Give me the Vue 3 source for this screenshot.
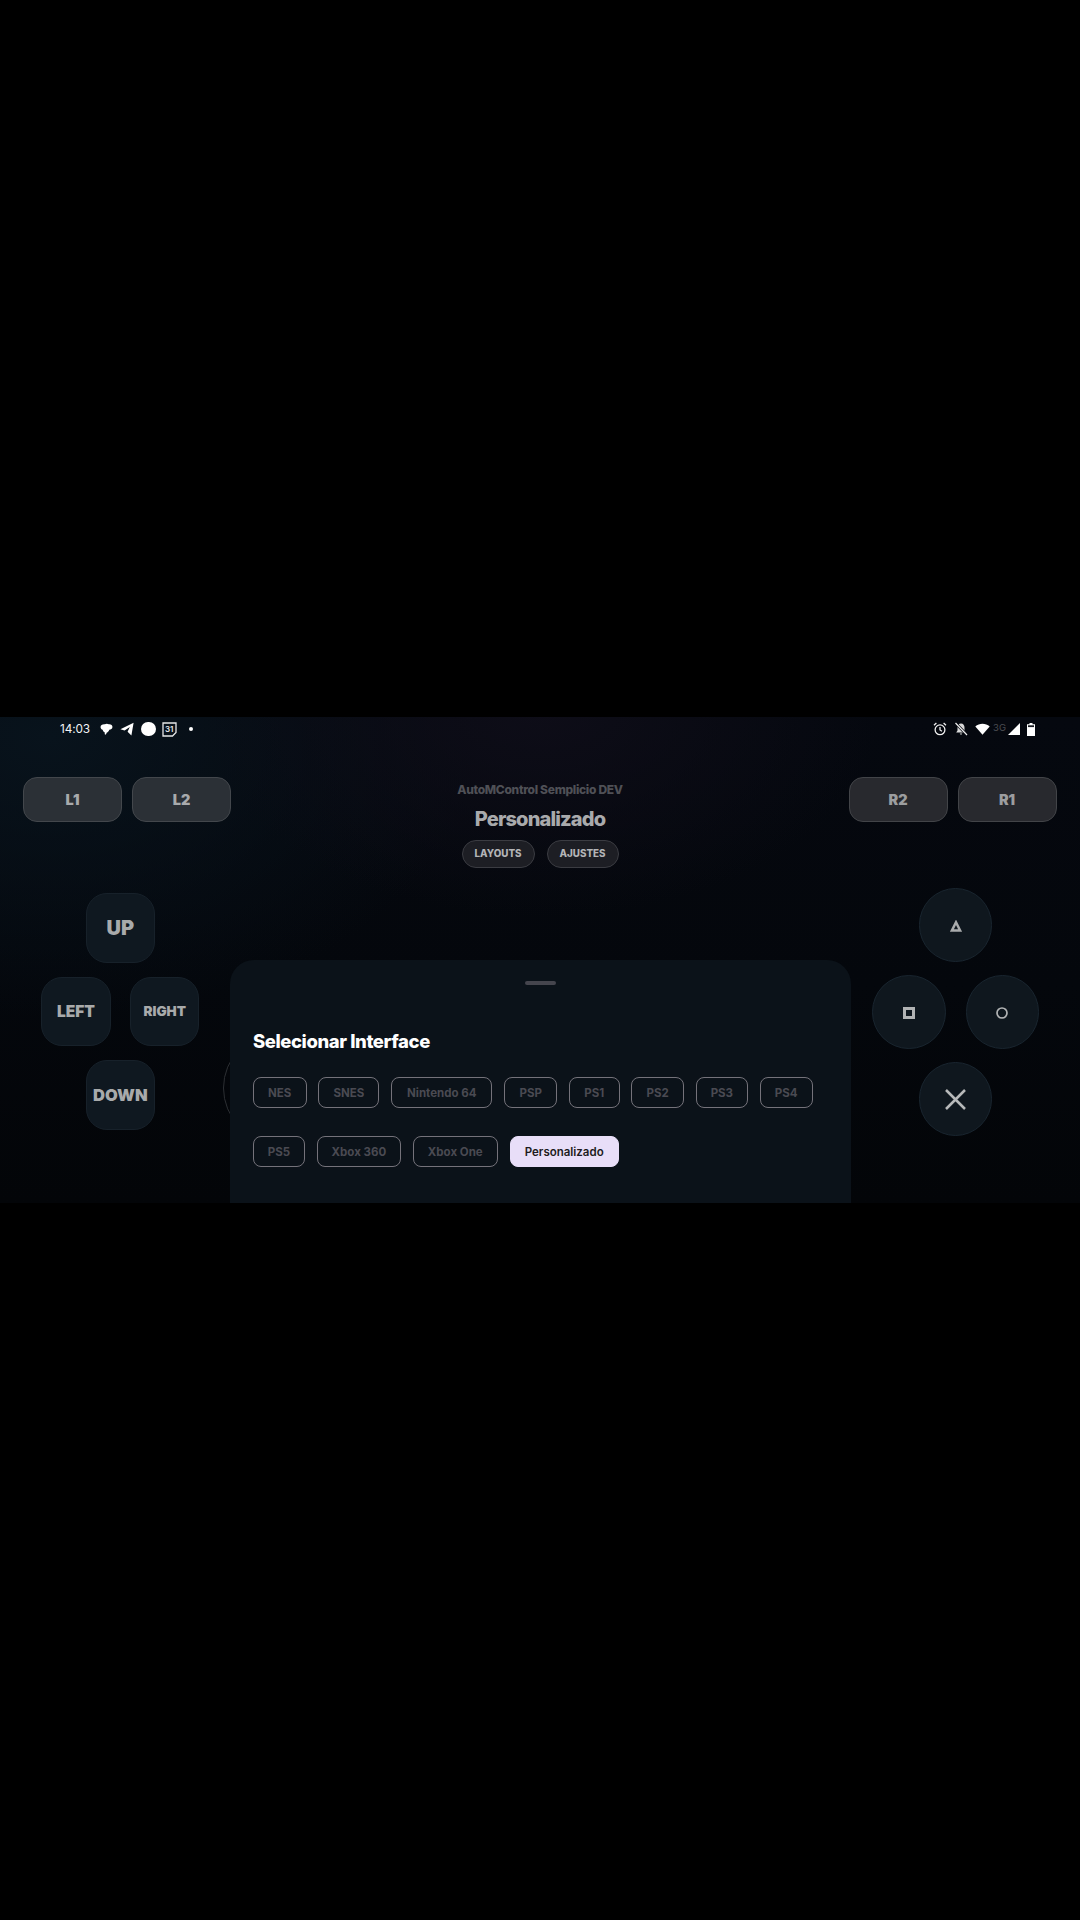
<script setup>
const chipRows = [
  [
    { label: 'NES', w: 53.5 },
    { label: 'SNES', w: 61 },
    { label: 'Nintendo 64', w: 101 },
    { label: 'PSP', w: 53 },
    { label: 'PS1', w: 50.5 },
    { label: 'PS2', w: 52.5 },
    { label: 'PS3', w: 52 },
    { label: 'PS4', w: 53 },
  ],
  [
    { label: 'PS5', w: 52 },
    { label: 'Xbox 360', w: 84 },
    { label: 'Xbox One', w: 85 },
    { label: 'Personalizado', w: 109, active: true },
  ],
]
</script>

<template>
  <main class="page">
    <section class="screen">
      <header class="status">
        <div class="status-left">
          <span class="time">14:03</span>
          <svg class="ic bubble" viewBox="0 0 14 14"><path d="M.6 4.200C.6 2.400 2.800 1.100 5.200 1.400 6.400.6 8.400.6 9.400 1.400 11.600 1.100 13.600 2.400 13.400 4.400 13.400 6.300 11.600 7.400 10 7.400 9.600 8.900 8.600 10 7.200 10.600 6.700 12.300 6 13 5.300 12.500 5 11.800 5.100 11 5.200 10.200 3.800 9.400 3 8.400 2.900 7.200 1.500 6.800.6 5.600.6 4.200Z" fill="#fff"/></svg>
          <svg class="ic plane" viewBox="0 0 14 14"><path d="M13.600.8 11.400 13.400 7.600 9.800 9.800 5 4.600 8.600.4 7.200Z" fill="#fff"/></svg>
          <span class="dot-big"></span>
          <svg class="ic cal" viewBox="0 0 15 15"><path d="M1 1h13v9.500L10.500 14H1Z" fill="none" stroke="#e6e7e8" stroke-width="1.300"/><text x="7.200" y="10.300" text-anchor="middle" class="cal-text">31</text></svg>
          <span class="dot-small"></span>
        </div>
        <div class="status-right">
          <svg class="ic alarm" viewBox="0 0 14 14"><circle cx="7" cy="7.800" r="4.900" fill="none" stroke="#f0f0f0" stroke-width="1.300"/><path d="M7 5v3l2 1.200M1 3.200 3.400 1M13 3.200 10.600 1" fill="none" stroke="#f0f0f0" stroke-width="1.300"/></svg>
          <svg class="ic belloff" viewBox="0 0 14 14"><path d="M7 1.500c2.300 0 3.500 1.800 3.500 4v3l1.300 2H2.200l1.300-2v-3c0-2.200 1.200-4 3.500-4ZM5.700 11.500h2.600L7 13Z" fill="#d8d8d8"/><path d="M1.500 1 13 13" stroke="#050810" stroke-width="2.600"/><path d="M1.500 1 13 13" stroke="#f0f0f0" stroke-width="1.200"/></svg>
          <svg class="ic wifi" viewBox="0 0 15 12"><path d="M.3 3.500C4.300-.2 10.700-.2 14.700 3.500L7.500 11.800Z" fill="#fff"/></svg>
          <span class="net">3G</span>
          <svg class="ic signal" viewBox="0 0 12 12"><path d="M12 0V12H0Z" fill="#fff"/></svg>
          <svg class="ic batt" viewBox="0 0 8 13"><path d="M2.500 0h3v1.300H8V13H0V1.300h2.500Z" fill="#fff"/><rect x="1" y="2.300" width="6" height="1.800" fill="#16191f"/></svg>
        </div>
      </header>

      <div class="top">
        <div class="shoulders">
          <button class="shoulder teal">L1</button>
          <button class="shoulder teal">L2</button>
        </div>
        <div class="center">
          <div class="app-name">AutoMControl Semplicio DEV</div>
          <h1 class="layout-name">Personalizado</h1>
          <div class="pills">
            <button class="pill p-layouts">LAYOUTS</button>
            <button class="pill p-ajustes">AJUSTES</button>
          </div>
        </div>
        <div class="shoulders">
          <button class="shoulder">R2</button>
          <button class="shoulder">R1</button>
        </div>
      </div>

      <div class="pads">
        <div class="dpad">
          <button class="key k-up">UP</button>
          <div class="mid">
            <button class="key k-left">LEFT</button>
            <button class="key k-right">RIGHT</button>
          </div>
          <button class="key k-down">DOWN</button>
        </div>
        <div class="face">
          <button class="round">
            <svg class="sym tri" viewBox="0 0 12 12"><path d="M6 2.300 10.200 10.600H1.800Z" fill="none" stroke="#a9abac" stroke-width="2.500"/></svg>
          </button>
          <div class="mid wide">
            <button class="round">
              <svg class="sym sq" viewBox="0 0 12 12"><rect x="1.500" y="1.500" width="9" height="9" fill="none" stroke="#b1b3b4" stroke-width="3"/></svg>
            </button>
            <button class="round">
              <svg class="sym ring" viewBox="0 0 12 12"><circle cx="6" cy="6" r="5" fill="none" stroke="#b1b3b4" stroke-width="1.700"/></svg>
            </button>
          </div>
          <button class="round">
            <svg class="sym cross" viewBox="0 0 21 21"><path d="M1 1 20 20M20 1 1 20" fill="none" stroke="#b7b9ba" stroke-width="2.500"/></svg>
          </button>
        </div>
      </div>

      <div class="stick"></div>

      <aside class="sheet">
        <div class="handle"></div>
        <h2 class="sheet-title">Selecionar Interface</h2>
        <div v-for="(row, i) in chipRows" :key="i" class="chips">
          <button
            v-for="chip in row"
            :key="chip.label"
            class="chip"
            :class="{ active: chip.active }"
            :style="{ width: chip.w + 'px' }"
          >{{ chip.label }}</button>
        </div>
      </aside>
    </section>
  </main>
</template>

<style>
html, body { background: #000; }
</style>

<style scoped>
.page {
  height: 1920px;
  width: 1080px;
  background: #000;
  padding-top: 717px;
  box-sizing: border-box;
  font-family: Inter, "Liberation Sans", sans-serif;
}
.screen {
  position: relative;
  height: 486px;
  overflow: hidden;
  background:
    radial-gradient(340px 210px at 540px -10px, #0e0d18 0%, rgba(14, 13, 24, 0) 100%),
    radial-gradient(430px 280px at 50px 20px, #08131c 0%, rgba(8, 19, 28, 0) 100%),
    linear-gradient(180deg, #05080f 0%, #04070c 55%, #030508 100%);
}
button {
  font-family: inherit;
  padding: 0;
  margin: 0;
  box-sizing: border-box;
  cursor: pointer;
}

/* status bar */
.status {
  height: 24px;
  display: flex;
  justify-content: space-between;
  align-items: center;
  padding: 0 45.500px 0 60px;
}
.status-left, .status-right {
  display: flex;
  align-items: center;
}
.time {
  font-size: 11.800px;
  color: #f2f3f4;
  width: 40px;
  letter-spacing: -0.1px;
}
.ic { display: block; }
.bubble { width: 13px; height: 13px; }
.plane { width: 14px; height: 14px; margin-left: 7px; }
.dot-big {
  width: 14.500px;
  height: 14.500px;
  border-radius: 50%;
  background: #fff;
  margin-left: 7px;
}
.cal { width: 15px; height: 15px; margin-left: 6px; }
.cal-text {
  font-size: 8px;
  font-weight: 600;
  fill: #e6e7e8;
}
.dot-small {
  width: 4px;
  height: 4px;
  border-radius: 50%;
  background: #fff;
  margin-left: 12px;
}
.alarm { width: 14px; height: 14px; }
.belloff { width: 14px; height: 14px; margin-left: 7px; }
.wifi { width: 15px; height: 12px; margin-left: 7px; }
.net {
  font-size: 9.500px;
  color: #4b4d52;
  width: 14px;
  margin-left: 3px;
  margin-top: -4px;
  text-align: center;
}
.signal { width: 12px; height: 12px; margin-left: 1px; }
.batt { width: 8px; height: 13px; margin-left: 7px; }

/* top row */
.top {
  display: flex;
  justify-content: space-between;
  align-items: flex-start;
  padding: 36px 23.500px 0 23px;
  height: 91px;
  box-sizing: content-box;
}
.shoulders {
  display: flex;
  gap: 10px;
}
.shoulder {
  width: 99px;
  height: 45px;
  border-radius: 14px;
  border: 1px solid #424448;
  background: #28292e;
  color: #9c9d9f;
  font-size: 14.500px;
  font-weight: 900;
}
.shoulder.teal {
  background: #2b3036;
  border-color: #43474c;
  color: #a8aaac;
}
.center {
  position: absolute;
  left: 0;
  right: 0;
  top: 60px;
  display: flex;
  flex-direction: column;
  align-items: center;
  text-align: center;
}
.app-name {
  font-size: 12px;
  line-height: 15px;
  font-weight: 800;
  letter-spacing: -0.3px;
  color: #4f5056;
  margin-top: 5px;
}
.layout-name {
  margin: 9px 0 0;
  font-size: 20px;
  line-height: 26px;
  font-weight: 800;
  letter-spacing: -0.85px;
  color: #a9aaac;
}
.pills {
  display: flex;
  gap: 12px;
  margin-top: 7.500px;
}
.pill {
  height: 28.500px;
  border-radius: 15px;
  border: 1px solid #3b3c42;
  background: #1d1e24;
  color: #b3b4b7;
  font-size: 9.800px;
  font-weight: 800;
}
.p-layouts { width: 73px; }
.p-ajustes { width: 72px; }

/* pads */
.pads {
  display: flex;
  justify-content: space-between;
  align-items: flex-start;
  padding: 20px 41px 0;
}
.dpad, .face {
  display: flex;
  flex-direction: column;
  align-items: center;
}
.dpad { gap: 14.100px; padding-top: 5px; width: 158.700px; }
.face { gap: 13.500px; width: 167px; }
.mid {
  display: flex;
  gap: 19.300px;
}
.mid.wide { gap: 20px; }
.key {
  width: 69.500px;
  height: 69.500px;
  border-radius: 21px;
  border: 1px solid #17212a;
  background: #0f1820;
  color: #a8aaab;
  font-weight: 900;
}
.k-up { font-size: 20px; }
.k-left { font-size: 15.500px; }
.k-right { font-size: 13.500px; }
.k-down { font-size: 16.500px; }
.round {
  width: 73.500px;
  height: 73.500px;
  border-radius: 50%;
  border: 1px solid #19252f;
  background: #0f171e;
  display: flex;
  align-items: center;
  justify-content: center;
}
.sym { display: block; }
.tri { width: 12px; height: 12px; margin-top: 3px; }
.sq { width: 12px; height: 12px; margin-top: 2px; }
.ring { width: 12px; height: 12px; margin-top: 2px; }
.cross { width: 21px; height: 21px; margin-top: 1px; }

/* hidden joystick behind the sheet */
.stick {
  position: absolute;
  left: 223px;
  top: 316px;
  width: 110px;
  height: 110px;
  border-radius: 50%;
  border: 1.500px solid #2c2f33;
  box-sizing: border-box;
}

/* bottom sheet */
.sheet {
  position: absolute;
  left: 229.500px;
  top: 242.500px;
  width: 621px;
  height: 260px;
  background: #0b1219;
  border-radius: 24px 24px 0 0;
  padding: 21.500px 23.500px 0;
  box-sizing: border-box;
}
.handle {
  width: 31px;
  height: 4px;
  border-radius: 2px;
  background: #45454d;
  margin: 0 auto;
}
.sheet-title {
  margin: 44px 0 0;
  font-size: 18.500px;
  line-height: 24px;
  font-weight: 800;
  letter-spacing: -0.42px;
  color: #fff;
}
.chips {
  display: flex;
  gap: 11.900px;
  margin-top: 24px;
  margin-bottom: 28px;
}
.chips + .chips { margin-top: 0; }
.chip {
  height: 31px;
  border-radius: 8px;
  border: 1.500px solid #74727a;
  background: transparent;
  color: #4a4a52;
  font-size: 11.500px;
  font-weight: 700;
  white-space: nowrap;
}
.chip.active {
  background: #e8def8;
  border-color: #e8def8;
  color: #1d1b20;
  font-weight: 600;
}
</style>
